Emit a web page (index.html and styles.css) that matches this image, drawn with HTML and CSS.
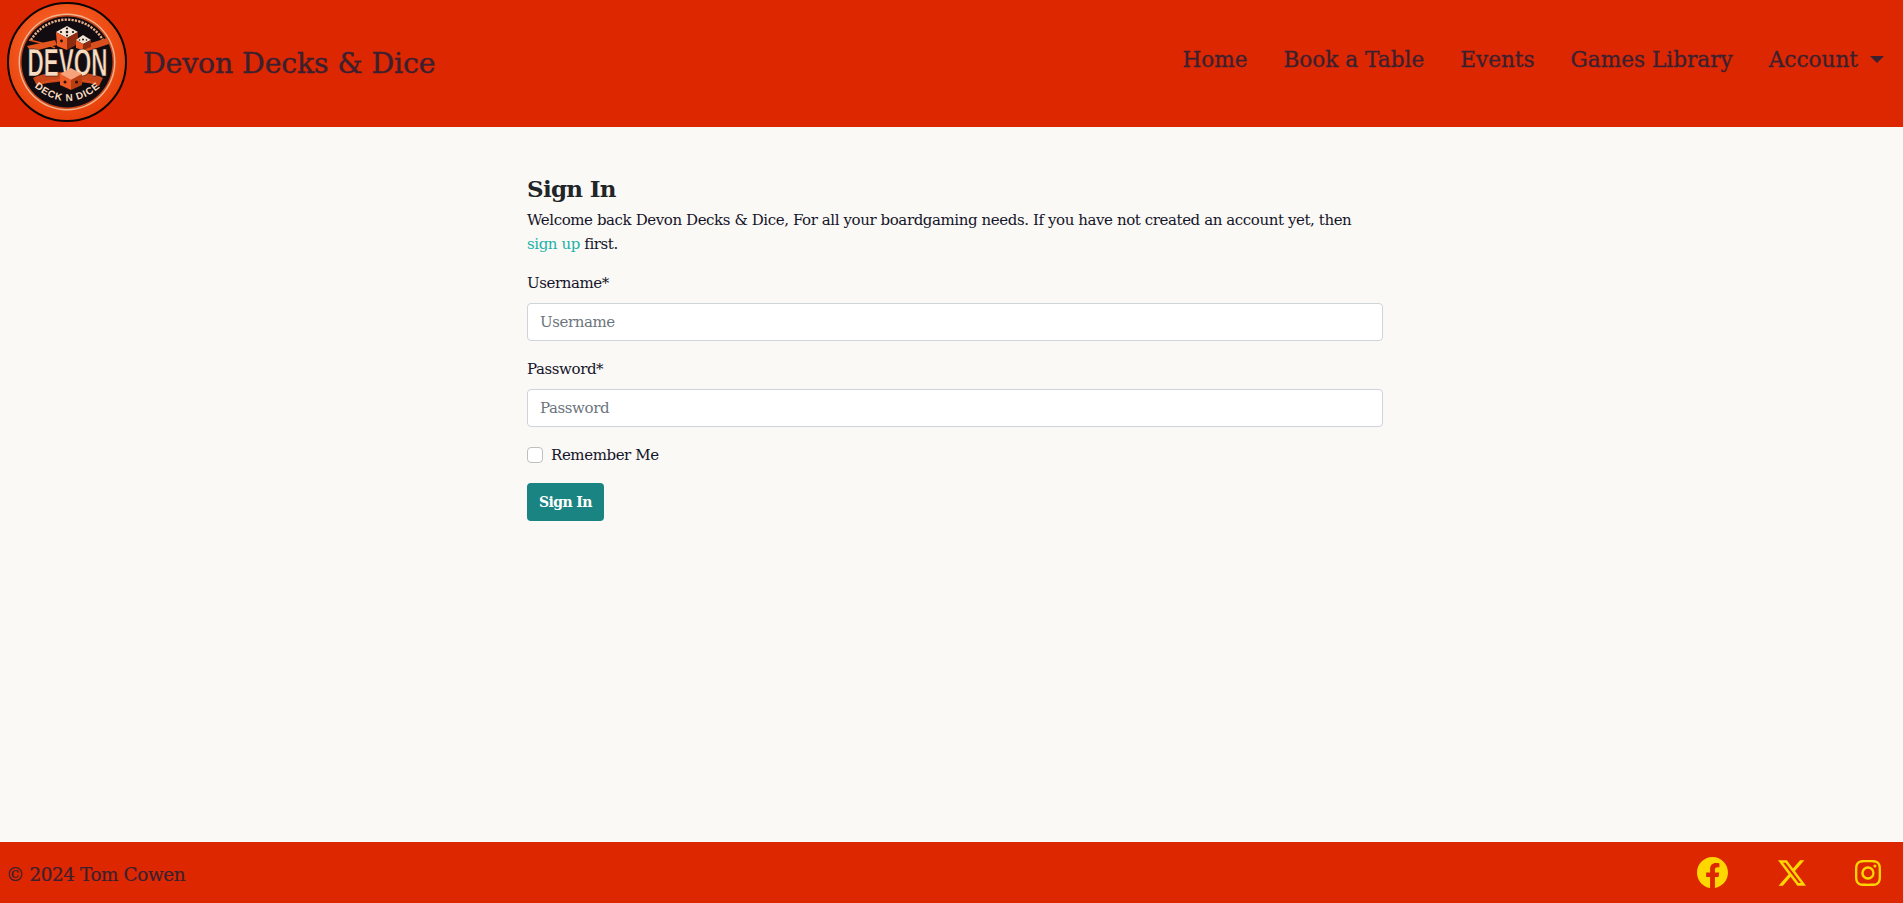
FILE: index.html
```html
<!DOCTYPE html>
<html lang="en">
<head>
  <meta charset="UTF-8">
  <meta name="viewport" content="width=device-width, initial-scale=1.0">
  <title>Devon Decks &amp; Dice</title>
  <link rel="stylesheet" href="styles.css">
</head>
<body>
  <header class="site-header">
    <a class="brand" href="#">
      <svg class="logo" viewBox="0 0 120 120" aria-hidden="true">
        <defs>
          <radialGradient id="logo-bg" cx="45%" cy="40%" r="65%">
            <stop offset="0" stop-color="#ff7436"/>
            <stop offset="1" stop-color="#e63a06"/>
          </radialGradient>
        </defs>
        <circle cx="60" cy="60" r="59" fill="url(#logo-bg)" stroke="#0b0505" stroke-width="2"/>
        <circle cx="60" cy="60" r="48.5" fill="#f0b48e"/>
        <circle cx="60" cy="60" r="47" fill="#c9461b"/>
        <circle cx="60" cy="60" r="45.5" fill="#120c10"/>
        <!-- ring lettering, too small to read in the original -->
        <path d="M24 38 A42 42 0 0 1 96 38" fill="none" stroke="#e9b08c" stroke-width="2.4" stroke-dasharray="2.2 1.2"/>
        <path d="M20 44 L48 38 L50 43 L24 50 Z" fill="#e2551f"/>
        <path d="M22 38 C30 40 38 41 48 46" fill="none" stroke="#e2551f" stroke-width="1.6"/>
        <path d="M74 44 L100 36 L102 42 L78 50 Z" fill="#d94f1d"/>
        <!-- top dice -->
        <polygon points="49,30 60,24 71,30 60,36" fill="#f3e6d6"/>
        <circle cx="60" cy="30" r="1.3" fill="#201010"/>
        <circle cx="54" cy="30" r="1.1" fill="#201010"/>
        <circle cx="66" cy="30" r="1.1" fill="#201010"/>
        <circle cx="60" cy="26.5" r="1.1" fill="#201010"/>
        <circle cx="60" cy="33.5" r="1.1" fill="#201010"/>
        <polygon points="49,30 60,36 60,48 50,44" fill="#ee5a24"/>
        <polygon points="60,36 71,30 71,42 60,48" fill="#8f2c10"/>
        <circle cx="54.5" cy="39" r="1.4" fill="#201010"/>
        <polygon points="69,38 76,33 84,38 76,42" fill="#f3e6d6"/>
        <circle cx="76" cy="37.5" r="1" fill="#201010"/>
        <circle cx="72.5" cy="38" r="0.8" fill="#201010"/>
        <circle cx="79.5" cy="38" r="0.8" fill="#201010"/>
        <polygon points="69,38 76,42 76,48 69,46" fill="#ee5a24"/>
        <polygon points="76,42 84,38 84,45 76,48" fill="#8f2c10"/>
        <!-- lower pattern -->
        <path d="M26 76 C40 68 82 68 96 76 L92 84 C78 78 44 78 30 84 Z" fill="#c9461b"/>
        <path d="M32 82 C46 76 76 76 90 82" fill="none" stroke="#e2551f" stroke-width="1.2"/>
        <text class="logo-word" x="60.5" y="74" text-anchor="middle" textLength="80" lengthAdjust="spacingAndGlyphs">DEVON</text>
        <!-- centre dice -->
        <polygon points="53,72 64,66 75,72 64,78" fill="#f6a27a"/>
        <polygon points="53,72 64,78 64,88 53,83" fill="#ee5a24"/>
        <polygon points="64,78 75,72 75,83 64,88" fill="#b83e14"/>
        <circle cx="58" cy="80" r="1.5" fill="#2a0f08"/>
        <circle cx="69.5" cy="80" r="1.5" fill="#2a0f08"/>
        <path id="logo-arc" d="M24 82 Q60 116 97 82" fill="none"/>
        <text class="logo-sub"><textPath href="#logo-arc" startOffset="50%" text-anchor="middle">DECK N DICE</textPath></text>
      </svg>
      <span class="brand-name">Devon Decks &amp; Dice</span>
    </a>
    <nav class="main-nav">
      <a href="#">Home</a>
      <a href="#">Book a Table</a>
      <a href="#">Events</a>
      <a href="#">Games Library</a>
      <a href="#" class="dropdown">Account</a>
    </nav>
  </header>

  <main class="content">
    <h1>Sign In</h1>
    <p class="intro">Welcome back Devon Decks &amp; Dice, For all your boardgaming needs. If you have not created an account yet, then <a href="#">sign up</a> first.</p>
    <form>
      <div class="form-group">
        <label for="username">Username*</label>
        <input type="text" id="username" placeholder="Username">
      </div>
      <div class="form-group">
        <label for="password">Password*</label>
        <input type="password" id="password" placeholder="Password">
      </div>
      <div class="check-row">
        <input type="checkbox" id="remember">
        <label for="remember">Remember Me</label>
      </div>
      <button type="submit">Sign In</button>
    </form>
  </main>

  <footer class="site-footer">
    <span class="copyright">© 2024 Tom Cowen</span>
    <div class="socials">
      <a href="#" class="icon-fb"><svg viewBox="0 0 16 16" fill="currentColor"><path d="M16 8.049c0-4.446-3.582-8.05-8-8.05C3.58 0-.002 3.603-.002 8.05c0 4.017 2.926 7.347 6.75 7.951v-5.625h-2.03V8.05H6.75V6.275c0-2.017 1.195-3.131 3.022-3.131.876 0 1.791.157 1.791.157v1.98h-1.009c-.993 0-1.303.621-1.303 1.258v1.51h2.218l-.354 2.326H9.25V16c3.824-.604 6.75-3.934 6.75-7.951z"/></svg></a>
      <a href="#" class="icon-x"><svg viewBox="0 0 16 16" fill="currentColor"><path d="M12.6.75h2.454l-5.36 6.142L16 15.25h-4.937l-3.867-5.07-4.425 5.07H.316l5.733-6.57L0 .75h5.063l3.495 4.633L12.601.75Zm-.86 13.028h1.36L4.323 2.145H2.865z"/></svg></a>
      <a href="#" class="icon-ig"><svg viewBox="0 0 16 16" fill="currentColor"><path d="M8 0C5.829 0 5.556.01 4.703.048 3.85.088 3.269.222 2.76.42a3.9 3.9 0 0 0-1.417.923A3.9 3.9 0 0 0 .42 2.76C.222 3.268.087 3.85.048 4.7.01 5.555 0 5.827 0 8.001c0 2.172.01 2.444.048 3.297.04.852.174 1.433.372 1.942.205.526.478.972.923 1.417.444.445.89.719 1.416.923.51.198 1.09.333 1.942.372C5.555 15.99 5.827 16 8 16s2.444-.01 3.298-.048c.851-.04 1.434-.174 1.943-.372a3.9 3.9 0 0 0 1.416-.923c.445-.445.718-.891.923-1.417.197-.509.332-1.09.372-1.942C15.99 10.445 16 10.173 16 8s-.01-2.445-.048-3.299c-.04-.851-.175-1.433-.372-1.941a3.9 3.9 0 0 0-.923-1.417A3.9 3.9 0 0 0 13.24.42c-.51-.198-1.092-.333-1.943-.372C10.443.01 10.172 0 7.998 0zm-.717 1.442h.718c2.136 0 2.389.007 3.232.046.78.035 1.204.166 1.486.275.373.145.64.319.92.599s.453.546.598.92c.11.281.24.705.275 1.485.039.843.047 1.096.047 3.231s-.008 2.389-.047 3.232c-.035.78-.166 1.203-.275 1.485a2.5 2.5 0 0 1-.599.919c-.28.28-.546.453-.92.598-.28.11-.704.24-1.485.276-.843.038-1.096.047-3.232.047s-2.39-.009-3.233-.047c-.78-.036-1.203-.166-1.485-.276a2.5 2.5 0 0 1-.92-.598 2.5 2.5 0 0 1-.6-.92c-.109-.281-.24-.705-.275-1.485-.038-.843-.046-1.096-.046-3.233s.008-2.388.046-3.231c.036-.78.166-1.204.276-1.486.145-.373.319-.64.599-.92s.546-.453.92-.598c.282-.11.705-.24 1.485-.276.738-.034 1.024-.044 2.515-.045zm4.988 1.328a.96.96 0 1 0 0 1.92.96.96 0 0 0 0-1.92m-4.27 1.122a4.109 4.109 0 1 0 0 8.217 4.109 4.109 0 0 0 0-8.217m0 1.441a2.667 2.667 0 1 1 0 5.334 2.667 2.667 0 0 1 0-5.334"/></svg></a>
    </div>
  </footer>
</body>
</html>
```

FILE: styles.css
```css
* {
  box-sizing: border-box;
}
body {
  margin: 0;
  min-height: 903px;
  display: flex;
  flex-direction: column;
  font-family: "DejaVu Serif", serif;
  font-size: 15px;
  letter-spacing: -0.41px;
  color: #14142a;
  background-color: #fbf9f5;
}
a {
  text-decoration: none;
  color: inherit;
}

/* header */
.site-header {
  height: 127px;
  padding: 0 19px 0 7px;
  display: flex;
  align-items: center;
  justify-content: space-between;
  background-color: #dc2700;
  color: #3b2030;
  letter-spacing: normal;
}
.brand {
  display: flex;
  align-items: center;
  gap: 16px;
}
.logo {
  width: 120px;
  height: 120px;
  margin-bottom: 3px;
}
.logo-word {
  font-family: "Liberation Sans", sans-serif;
  font-weight: 700;
  font-size: 38px;
  fill: #f9dcc0;
  stroke: #120c10;
  stroke-width: 0.6px;
}
.logo-sub {
  font-family: "Liberation Sans", sans-serif;
  font-weight: 700;
  font-size: 10px;
  letter-spacing: 0.8px;
  fill: #f9dcc0;
}
.brand-name {
  font-size: 28.3px;
  letter-spacing: -0.1px;
  -webkit-text-stroke: 0.4px currentColor;
}
.main-nav {
  display: flex;
  align-items: center;
  gap: 36px;
  font-size: 21.6px;
  margin-bottom: 9px;
  -webkit-text-stroke: 0.3px currentColor;
}
.dropdown::after {
  content: "";
  display: inline-block;
  margin-left: 12px;
  vertical-align: 4px;
  border-top: 7px solid currentColor;
  border-left: 7px solid transparent;
  border-right: 7px solid transparent;
}

/* sign in form */
.content {
  flex: 1;
  width: 856px;
  margin-left: 527px;
  padding-top: 47px;
}
h1 {
  margin: 0 0 4px;
  font-size: 23px;
  letter-spacing: -0.7px;
  line-height: 30px;
  font-weight: 700;
  color: #212529;
}
.intro {
  margin: 0 0 15px;
  line-height: 24px;
}
.intro a {
  color: #20b2aa;
}
.form-group {
  margin-bottom: 16px;
}
.form-group label {
  display: block;
  line-height: 24px;
  margin-bottom: 8px;
}
.form-group input {
  display: block;
  width: 100%;
  height: 38px;
  padding: 6px 12px;
  font: inherit;
  letter-spacing: inherit;
  color: #212529;
  background-color: #fff;
  border: 1px solid #ced4da;
  border-radius: 4px;
}
.form-group input::placeholder {
  color: #6c757d;
}
.check-row {
  display: flex;
  align-items: center;
  gap: 8px;
  line-height: 24px;
  margin-bottom: 16px;
}
.check-row input {
  appearance: none;
  width: 16px;
  height: 16px;
  margin: 0;
  background-color: #fff;
  border: 1px solid #bfbfbf;
  border-radius: 4px;
}
button {
  height: 38px;
  padding: 0 12px;
  font: inherit;
  font-size: 14px;
  font-weight: 700;
  letter-spacing: -0.6px;
  color: #fff;
  background-color: #198481;
  border: none;
  border-radius: 4px;
}

/* footer */
.site-footer {
  height: 61px;
  padding: 0 22px 0 6px;
  display: flex;
  align-items: center;
  justify-content: space-between;
  background-color: #dc2700;
  color: #3b2030;
  font-size: 18.4px;
}
.copyright {
  margin-top: 3px;
  -webkit-text-stroke: 0.2px currentColor;
}
.socials {
  display: flex;
  align-items: center;
  gap: 49px;
  color: #ffd700;
}
.socials a {
  display: block;
}
.socials svg {
  display: block;
  width: 100%;
  height: 100%;
}
.icon-fb {
  width: 31px;
  height: 31px;
  margin-right: 1px;
}
.icon-x {
  width: 28px;
  height: 28px;
}
.icon-ig {
  width: 26px;
  height: 26px;
}
```
